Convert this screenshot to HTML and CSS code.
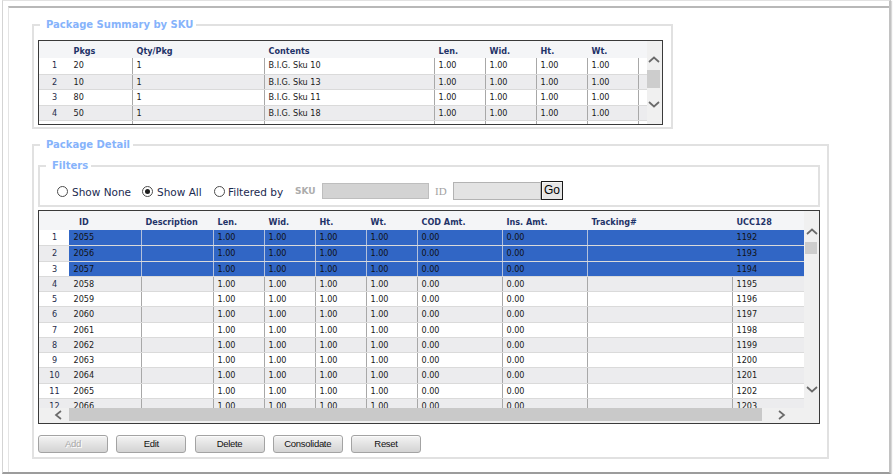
FILE: index.html
```html
<!DOCTYPE html>
<html>
<head>
<meta charset="utf-8">
<title>Package Summary</title>
<link rel="stylesheet" href="styles.css">
</head>
<body>
<div class="window">
  <div class="panel">
    <fieldset class="fs fs-summary">
      <legend>Package Summary by SKU</legend>
      <div class="stable">
        <div class="sbody">
          <div class="row head"><div class="c n"></div><div class="c">Pkgs</div><div class="c">Qty/Pkg</div><div class="c">Contents</div><div class="c">Len.</div><div class="c">Wid.</div><div class="c">Ht.</div><div class="c">Wt.</div><div class="c"></div></div>
          <div class="row first"><div class="c n">1</div><div class="c">20</div><div class="c d">1</div><div class="c d">B.I.G. Sku 10</div><div class="c d">1.00</div><div class="c d">1.00</div><div class="c d">1.00</div><div class="c d">1.00</div><div class="c d"></div></div>
          <div class="row alt"><div class="c n">2</div><div class="c">10</div><div class="c d">1</div><div class="c d">B.I.G. Sku 13</div><div class="c d">1.00</div><div class="c d">1.00</div><div class="c d">1.00</div><div class="c d">1.00</div><div class="c d"></div></div>
          <div class="row"><div class="c n">3</div><div class="c">80</div><div class="c d">1</div><div class="c d">B.I.G. Sku 11</div><div class="c d">1.00</div><div class="c d">1.00</div><div class="c d">1.00</div><div class="c d">1.00</div><div class="c d"></div></div>
          <div class="row alt"><div class="c n">4</div><div class="c">50</div><div class="c d">1</div><div class="c d">B.I.G. Sku 18</div><div class="c d">1.00</div><div class="c d">1.00</div><div class="c d">1.00</div><div class="c d">1.00</div><div class="c d"></div></div>
          <div class="row"><div class="c n"></div><div class="c"></div><div class="c d"></div><div class="c d"></div><div class="c d"></div><div class="c d"></div><div class="c d"></div><div class="c d"></div><div class="c d"></div></div>
        </div>
        <div class="vscroll vs-sum">
          <svg class="chev-up" width="12" height="7" viewBox="0 0 12 7"><polyline points="1,6 6,1.5 11,6" fill="none" stroke="#6a6a6a" stroke-width="1.7"/></svg>
          <div class="vthumb"></div>
          <svg class="chev-down" width="12" height="7" viewBox="0 0 12 7"><polyline points="1,1 6,5.5 11,1" fill="none" stroke="#6a6a6a" stroke-width="1.7"/></svg>
        </div>
      </div>
    </fieldset>

    <fieldset class="fs fs-detail">
      <legend>Package Detail</legend>
      <fieldset class="fs fs-filters">
        <legend>Filters</legend>
        <div class="filters">
          <div class="opt opt1"><span class="radio"></span><span class="olabel">Show None</span></div>
          <div class="opt opt2"><span class="radio on"></span><span class="olabel">Show All</span></div>
          <div class="opt opt3"><span class="radio"></span><span class="olabel">Filtered by</span></div>
          <span class="sku">SKU</span>
          <span class="inp inp-sku"></span>
          <span class="idl">ID</span>
          <span class="inp inp-id"></span>
          <span class="go">Go</span>
        </div>
      </fieldset>

      <div class="dtable">
        <div class="dbody">
          <div class="row head"><div class="c n"></div><div class="c hid">ID</div><div class="c">Description</div><div class="c">Len.</div><div class="c">Wid.</div><div class="c">Ht.</div><div class="c">Wt.</div><div class="c">COD Amt.</div><div class="c">Ins. Amt.</div><div class="c">Tracking#</div><div class="c">UCC128</div></div>
          <div class="row first sel"><div class="c n">1</div><div class="c">2055</div><div class="c d"></div><div class="c d">1.00</div><div class="c d">1.00</div><div class="c d">1.00</div><div class="c d">1.00</div><div class="c d">0.00</div><div class="c d">0.00</div><div class="c d"></div><div class="c">1192</div></div>
          <div class="row alt sel"><div class="c n">2</div><div class="c">2056</div><div class="c d"></div><div class="c d">1.00</div><div class="c d">1.00</div><div class="c d">1.00</div><div class="c d">1.00</div><div class="c d">0.00</div><div class="c d">0.00</div><div class="c d"></div><div class="c">1193</div></div>
          <div class="row sel"><div class="c n">3</div><div class="c">2057</div><div class="c d"></div><div class="c d">1.00</div><div class="c d">1.00</div><div class="c d">1.00</div><div class="c d">1.00</div><div class="c d">0.00</div><div class="c d">0.00</div><div class="c d"></div><div class="c">1194</div></div>
          <div class="row alt"><div class="c n">4</div><div class="c">2058</div><div class="c d"></div><div class="c d">1.00</div><div class="c d">1.00</div><div class="c d">1.00</div><div class="c d">1.00</div><div class="c d">0.00</div><div class="c d">0.00</div><div class="c d"></div><div class="c d">1195</div></div>
          <div class="row"><div class="c n">5</div><div class="c">2059</div><div class="c d"></div><div class="c d">1.00</div><div class="c d">1.00</div><div class="c d">1.00</div><div class="c d">1.00</div><div class="c d">0.00</div><div class="c d">0.00</div><div class="c d"></div><div class="c d">1196</div></div>
          <div class="row alt"><div class="c n">6</div><div class="c">2060</div><div class="c d"></div><div class="c d">1.00</div><div class="c d">1.00</div><div class="c d">1.00</div><div class="c d">1.00</div><div class="c d">0.00</div><div class="c d">0.00</div><div class="c d"></div><div class="c d">1197</div></div>
          <div class="row"><div class="c n">7</div><div class="c">2061</div><div class="c d"></div><div class="c d">1.00</div><div class="c d">1.00</div><div class="c d">1.00</div><div class="c d">1.00</div><div class="c d">0.00</div><div class="c d">0.00</div><div class="c d"></div><div class="c d">1198</div></div>
          <div class="row alt"><div class="c n">8</div><div class="c">2062</div><div class="c d"></div><div class="c d">1.00</div><div class="c d">1.00</div><div class="c d">1.00</div><div class="c d">1.00</div><div class="c d">0.00</div><div class="c d">0.00</div><div class="c d"></div><div class="c d">1199</div></div>
          <div class="row"><div class="c n">9</div><div class="c">2063</div><div class="c d"></div><div class="c d">1.00</div><div class="c d">1.00</div><div class="c d">1.00</div><div class="c d">1.00</div><div class="c d">0.00</div><div class="c d">0.00</div><div class="c d"></div><div class="c d">1200</div></div>
          <div class="row alt"><div class="c n">10</div><div class="c">2064</div><div class="c d"></div><div class="c d">1.00</div><div class="c d">1.00</div><div class="c d">1.00</div><div class="c d">1.00</div><div class="c d">0.00</div><div class="c d">0.00</div><div class="c d"></div><div class="c d">1201</div></div>
          <div class="row"><div class="c n">11</div><div class="c">2065</div><div class="c d"></div><div class="c d">1.00</div><div class="c d">1.00</div><div class="c d">1.00</div><div class="c d">1.00</div><div class="c d">0.00</div><div class="c d">0.00</div><div class="c d"></div><div class="c d">1202</div></div>
          <div class="row alt"><div class="c n">12</div><div class="c">2066</div><div class="c d"></div><div class="c d">1.00</div><div class="c d">1.00</div><div class="c d">1.00</div><div class="c d">1.00</div><div class="c d">0.00</div><div class="c d">0.00</div><div class="c d"></div><div class="c d">1203</div></div>
        </div>
        <div class="vscroll vs-det">
          <svg class="chev-up" width="12" height="7" viewBox="0 0 12 7"><polyline points="1,6 6,1.5 11,6" fill="none" stroke="#6a6a6a" stroke-width="1.7"/></svg>
          <div class="vthumb"></div>
          <svg class="chev-down" width="12" height="7" viewBox="0 0 12 7"><polyline points="1,1 6,5.5 11,1" fill="none" stroke="#6a6a6a" stroke-width="1.7"/></svg>
        </div>
        <div class="hscroll">
          <div class="harrow hl"><svg width="8" height="10" viewBox="0 0 8 10"><polyline points="7,1 2,5 7,9" fill="none" stroke="#6a6a6a" stroke-width="1.7"/></svg></div>
          <div class="hthumb"></div>
          <div class="harrow hr"><svg width="8" height="10" viewBox="0 0 8 10"><polyline points="1,1 6,5 1,9" fill="none" stroke="#6a6a6a" stroke-width="1.7"/></svg></div>
        </div>
      </div>

      <div class="btns">
        <span class="btn dis">Add</span>
        <span class="btn">Edit</span>
        <span class="btn">Delete</span>
        <span class="btn">Consolidate</span>
        <span class="btn">Reset</span>
      </div>
    </fieldset>
  </div>
</div>
</body>
</html>
```

FILE: styles.css
```css
* { box-sizing: border-box; }
html, body { margin: 0; padding: 0; background: #fff; }
body {
  font-family: "DejaVu Sans Condensed", "DejaVu Sans", sans-serif;
  font-stretch: condensed;
  font-size: 9px;
  color: #1a1a1a;
}

.window {
  margin-left: 2px;
  width: 889px;
  height: 474px;
  border-left: 1px solid #d4d4d4;
  border-top: 1px solid #e2e2e2;
  border-right: 2px solid #c2c2c2;
  border-bottom: 2px solid #9c9c9c;
  box-shadow: 1px 1px 1px rgba(0, 0, 0, 0.15);
}

.panel {
  margin: 5px 0 0 5px;
  height: 466px;
  border-top: 2px solid #b8b8b8;
  border-left: 1px solid #e4e4e4;
  padding-left: 23px;
}

/* fieldsets */
.fs {
  margin: 0;
  border: 2px solid #e1e1e1;
  min-width: 0;
}
.fs > legend {
  margin-left: 2px;
  padding: 0 3px 0 6px;
  font-family: "DejaVu Sans", sans-serif;
  font-stretch: normal;
  font-weight: bold;
  font-size: 10px;
  line-height: 12px;
  color: #86b3fb;
}
.fs-summary {
  margin-top: 11px;
  width: 641px;
  padding: 9px 8px 2px 4px;
}
.fs-detail {
  margin-top: 10px;
  width: 797px;
  padding: 9px 7px 4px 4px;
}
.fs-filters {
  width: 782px;
  padding: 9px 0 5px 4px;
}

/* filters row */
.filters {
  display: flex;
  align-items: center;
  height: 19px;
  padding-left: 13px;
}
.opt {
  display: flex;
  align-items: center;
  margin-top: 2px;
}
.opt1 { width: 85px; }
.opt2 { width: 72px; }
.opt3 { width: 81px; }
.radio {
  width: 11px;
  height: 11px;
  border: 1px solid #4c4c4c;
  border-radius: 50%;
  background: #fff;
  display: flex;
  align-items: center;
  justify-content: center;
}
.radio.on::after {
  content: "";
  width: 5px;
  height: 5px;
  border-radius: 50%;
  background: #1e1e1e;
}
.olabel {
  margin-left: 4px;
  font-family: "DejaVu Sans", sans-serif;
  font-stretch: normal;
  font-size: 10.5px;
  color: #1b2a50;
}
.opt3 .olabel { margin-left: 3px; }
.sku {
  width: 27px;
  font-family: "DejaVu Sans", sans-serif;
  font-stretch: normal;
  font-weight: bold;
  font-size: 9px;
  color: #acacac;
}
.inp {
  display: block;
  background: #d3d3d3;
  border: 1px solid #bebebe;
}
.inp-sku { width: 107px; height: 16px; margin-top: 1px; }
.idl {
  width: 24px;
  padding-left: 6px;
  font-family: "Liberation Serif", serif;
  font-size: 11px;
  color: #a2a2a2;
}
.inp-id { width: 88px; height: 18px; background: #e3e3e3; border-color: #b3b3b3; }
.go {
  width: 22px;
  height: 19px;
  border: 1px solid #1a1a1a;
  box-shadow: inset 1px 1px 0 #f6f6f6;
  background: #e6e6e6;
  font-family: "Liberation Sans", Arial, sans-serif;
  font-stretch: normal;
  font-size: 12px;
  line-height: 17px;
  text-align: center;
  color: #000;
}

/* grid tables */
.row {
  display: grid;
  height: 15.25px;
  border-top: 1px solid #dadada;
  line-height: 14px;
  background: #fff;
}
.row.first { border-top: 0; }
.row.alt { background: #ececee; }
.row.head {
  border-top: 0;
  background: #f4f5f7;
  font-weight: bold;
  color: #1f3368;
}
.c {
  padding-left: 3.5px;
  border-left: 1px solid transparent;
  white-space: nowrap;
  overflow: hidden;
}
.c.d { border-left-color: #a8a8a8; }
.c.n { text-align: center; padding-left: 0; color: #1f2b4a; }
.head .c.n { color: transparent; }
.sel .c:not(.n) { background: #3166c5; color: #111; }
.sel .c.d { border-left-color: #b3c1dc; }

.stable {
  display: flex;
  width: 625px;
  height: 85px;
  border: 1px solid #3a3a3a;
  background: #fff;
}
.sbody { width: 608px; overflow: hidden; }
.sbody .row { grid-template-columns: 30px 63px 132px 170px 51px 51px 51px 51px 9px; height: 15.5px; line-height: 15px; }
.sbody .row.head { height: 17px; padding-top: 3px; line-height: 14px; }

.dtable {
  display: grid;
  grid-template-columns: 765px 15px;
  grid-template-rows: 197px 15px;
  width: 782px;
  height: 214px;
  margin-top: 3px;
  border: 1px solid #3a3a3a;
  background: #fff;
}
.dbody { overflow: hidden; }
.dbody .row { grid-template-columns: 30px 72px 72px 51px 51px 51px 51px 85px 85px 145px 72px; }
.dbody .row.head { height: 19px; padding-top: 3px; line-height: 16px; }
.dbody .head .hid { padding-left: 9px; }

/* scrollbars */
.vscroll {
  width: 15px;
  background: #f0f0f0;
  display: flex;
  flex-direction: column;
}
.vscroll svg { display: block; }
.vthumb { background: #cdcdcd; }
.vs-sum .chev-up { margin: 15px 0 0 1px; }
.vs-sum .vthumb { margin: 7px 2px 0 0; height: 18px; }
.vs-sum .chev-down { margin: auto 0 16px 1px; }
.vs-det .chev-up { margin: 17px 0 0 2px; }
.vs-det .vthumb { margin: 7px 2px 0 1px; height: 12px; }
.vs-det .chev-down { margin: auto 0 15px 2px; }

.hscroll {
  grid-column: 1 / 3;
  display: flex;
  align-items: flex-start;
  background: #f0f0f0;
}
.harrow svg { display: block; }
.hl { width: 30px; padding: 2px 0 0 15px; }
.hthumb { width: 693px; height: 13px; background: #c9c9c9; }
.hr { width: 57px; padding: 2px 0 0 16px; }

/* buttons */
.btns {
  display: flex;
  gap: 8.25px;
  margin-top: 11px;
}
.btn {
  width: 70px;
  height: 18px;
  border: 1px solid #a3a3a3;
  border-radius: 3px;
  background: linear-gradient(#f4f4f4, #e3e3e3 50%, #d3d3d3);
  box-shadow: inset 0 1px 0 #fbfbfb;
  font-family: "Liberation Sans", Arial, sans-serif;
  font-size: 9.5px;
  letter-spacing: -0.3px;
  line-height: 16px;
  text-align: center;
  color: #111;
}
.btn.dis { color: #a9a9a9; text-shadow: 1px 1px 0 #fff; }
```
